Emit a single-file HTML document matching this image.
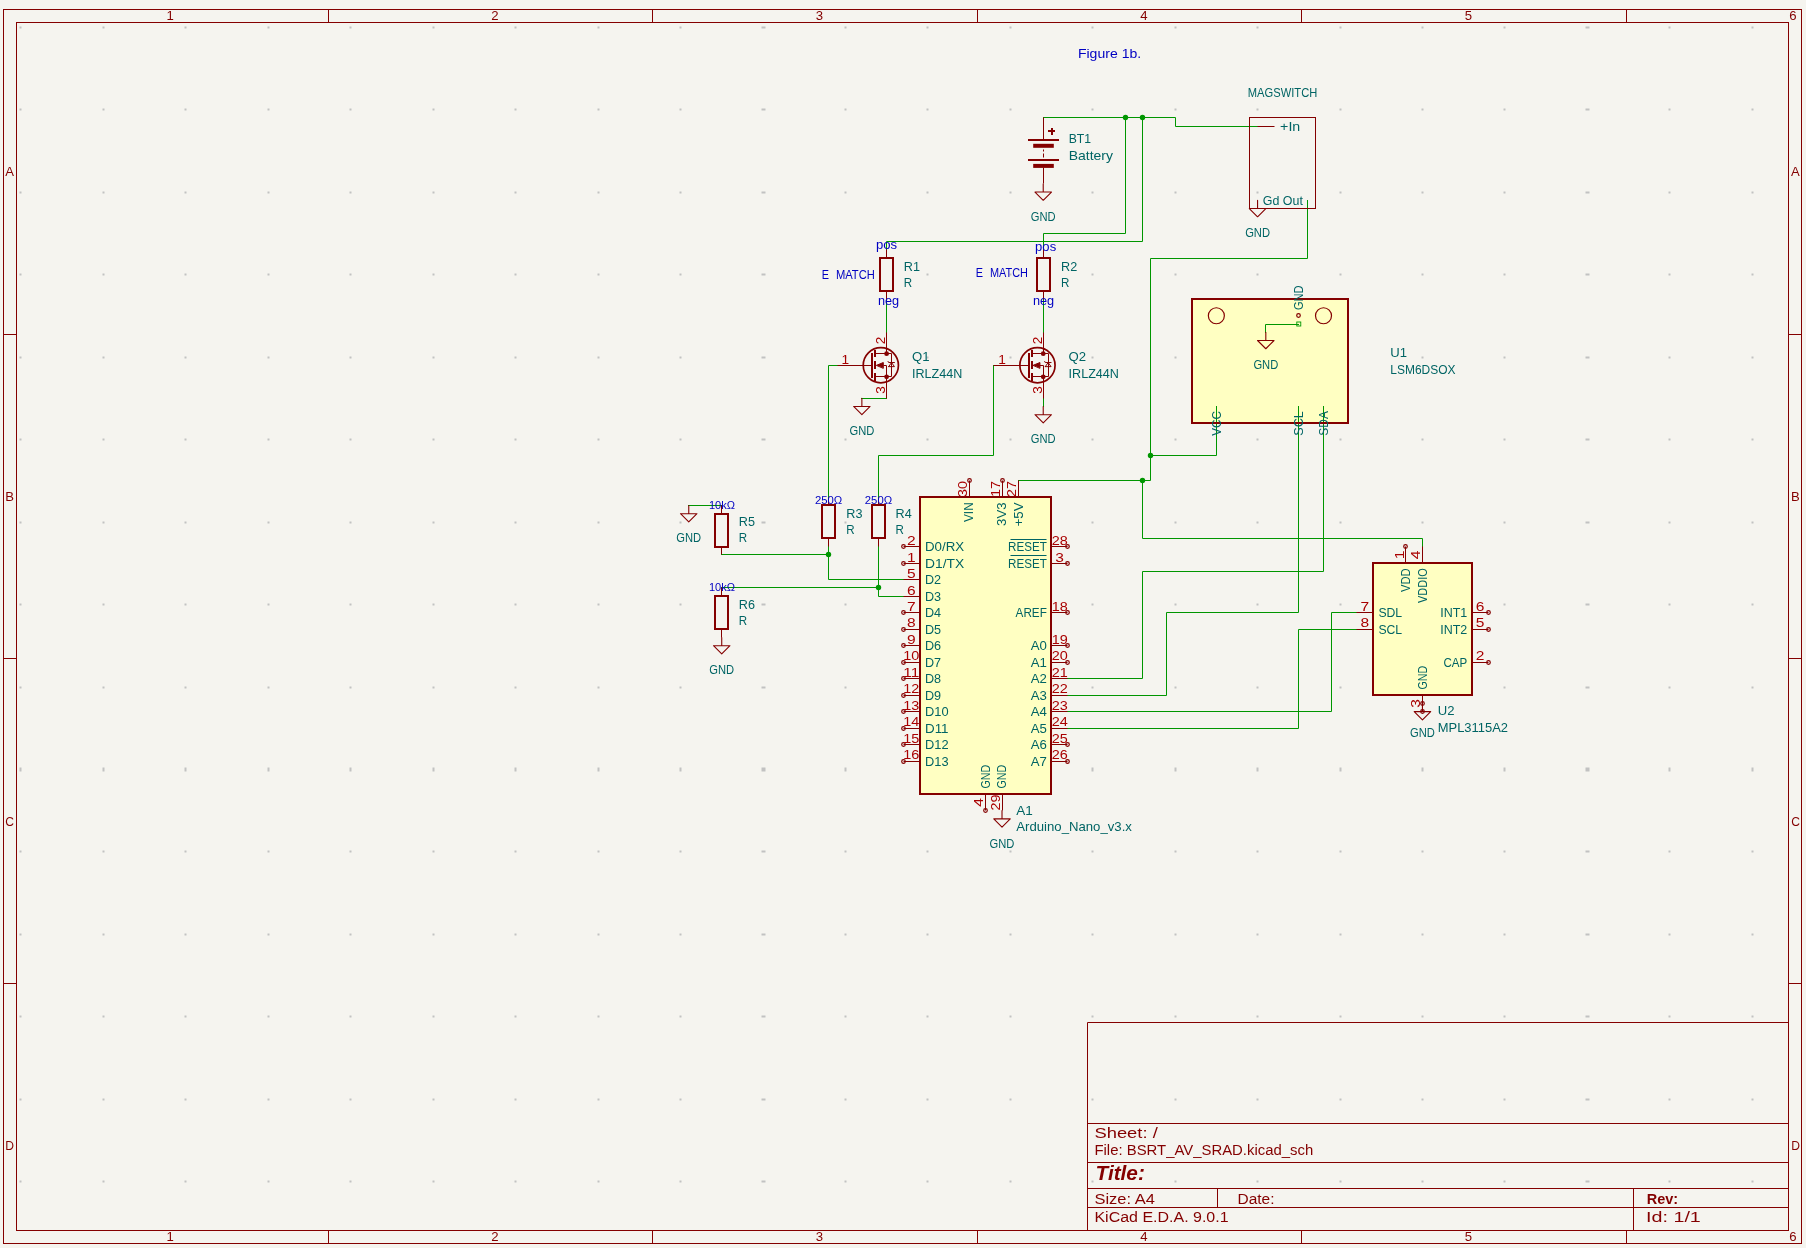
<!DOCTYPE html>
<html><head><meta charset="utf-8"><style>
html,body{margin:0;padding:0;background:#f5f4ef;}
body{width:1806px;height:1248px;overflow:hidden;}
svg{display:block;will-change:transform;}
text{font-family:"Liberation Sans", sans-serif;}
</style></head><body>
<svg width="1806" height="1248" viewBox="0 0 1806 1248" font-family='"Liberation Sans", sans-serif'>
<rect x="0" y="0" width="1806" height="1248" fill="#f5f4ef"/>
<path d="M19.5 26.5h2v2h-2zM19.5 108.5h2v2h-2zM19.5 191.5h2v2h-2zM19.5 273.5h2v2h-2zM19.5 356.5h2v2h-2zM19.5 438.5h2v2h-2zM19.5 521.5h2v2h-2zM19.5 603.5h2v2h-2zM19.5 686.5h2v2h-2zM19.5 767.5h2v4h-2zM19.5 850.5h2v2h-2zM19.5 933.5h2v2h-2zM19.5 1015.5h2v2h-2zM19.5 1098.5h2v2h-2zM19.5 1180.5h2v2h-2zM102.5 26.5h2v2h-2zM102.5 108.5h2v2h-2zM102.5 191.5h2v2h-2zM102.5 273.5h2v2h-2zM102.5 356.5h2v2h-2zM102.5 438.5h2v2h-2zM102.5 521.5h2v2h-2zM102.5 603.5h2v2h-2zM102.5 686.5h2v2h-2zM102.5 767.5h2v4h-2zM102.5 850.5h2v2h-2zM102.5 933.5h2v2h-2zM102.5 1015.5h2v2h-2zM102.5 1098.5h2v2h-2zM102.5 1180.5h2v2h-2zM184.5 26.5h2v2h-2zM184.5 108.5h2v2h-2zM184.5 191.5h2v2h-2zM184.5 273.5h2v2h-2zM184.5 356.5h2v2h-2zM184.5 438.5h2v2h-2zM184.5 521.5h2v2h-2zM184.5 603.5h2v2h-2zM184.5 686.5h2v2h-2zM184.5 767.5h2v4h-2zM184.5 850.5h2v2h-2zM184.5 933.5h2v2h-2zM184.5 1015.5h2v2h-2zM184.5 1098.5h2v2h-2zM184.5 1180.5h2v2h-2zM267.5 26.5h2v2h-2zM267.5 108.5h2v2h-2zM267.5 191.5h2v2h-2zM267.5 273.5h2v2h-2zM267.5 356.5h2v2h-2zM267.5 438.5h2v2h-2zM267.5 521.5h2v2h-2zM267.5 603.5h2v2h-2zM267.5 686.5h2v2h-2zM267.5 767.5h2v4h-2zM267.5 850.5h2v2h-2zM267.5 933.5h2v2h-2zM267.5 1015.5h2v2h-2zM267.5 1098.5h2v2h-2zM267.5 1180.5h2v2h-2zM349.5 26.5h2v2h-2zM349.5 108.5h2v2h-2zM349.5 191.5h2v2h-2zM349.5 273.5h2v2h-2zM349.5 356.5h2v2h-2zM349.5 438.5h2v2h-2zM349.5 521.5h2v2h-2zM349.5 603.5h2v2h-2zM349.5 686.5h2v2h-2zM349.5 767.5h2v4h-2zM349.5 850.5h2v2h-2zM349.5 933.5h2v2h-2zM349.5 1015.5h2v2h-2zM349.5 1098.5h2v2h-2zM349.5 1180.5h2v2h-2zM432.5 26.5h2v2h-2zM432.5 108.5h2v2h-2zM432.5 191.5h2v2h-2zM432.5 273.5h2v2h-2zM432.5 356.5h2v2h-2zM432.5 438.5h2v2h-2zM432.5 521.5h2v2h-2zM432.5 603.5h2v2h-2zM432.5 686.5h2v2h-2zM432.5 767.5h2v4h-2zM432.5 850.5h2v2h-2zM432.5 933.5h2v2h-2zM432.5 1015.5h2v2h-2zM432.5 1098.5h2v2h-2zM432.5 1180.5h2v2h-2zM514.5 26.5h2v2h-2zM514.5 108.5h2v2h-2zM514.5 191.5h2v2h-2zM514.5 273.5h2v2h-2zM514.5 356.5h2v2h-2zM514.5 438.5h2v2h-2zM514.5 521.5h2v2h-2zM514.5 603.5h2v2h-2zM514.5 686.5h2v2h-2zM514.5 767.5h2v4h-2zM514.5 850.5h2v2h-2zM514.5 933.5h2v2h-2zM514.5 1015.5h2v2h-2zM514.5 1098.5h2v2h-2zM514.5 1180.5h2v2h-2zM597.5 26.5h2v2h-2zM597.5 108.5h2v2h-2zM597.5 191.5h2v2h-2zM597.5 273.5h2v2h-2zM597.5 356.5h2v2h-2zM597.5 438.5h2v2h-2zM597.5 521.5h2v2h-2zM597.5 603.5h2v2h-2zM597.5 686.5h2v2h-2zM597.5 767.5h2v4h-2zM597.5 850.5h2v2h-2zM597.5 933.5h2v2h-2zM597.5 1015.5h2v2h-2zM597.5 1098.5h2v2h-2zM597.5 1180.5h2v2h-2zM679.5 26.5h2v2h-2zM679.5 108.5h2v2h-2zM679.5 191.5h2v2h-2zM679.5 273.5h2v2h-2zM679.5 356.5h2v2h-2zM679.5 438.5h2v2h-2zM679.5 521.5h2v2h-2zM679.5 603.5h2v2h-2zM679.5 686.5h2v2h-2zM679.5 767.5h2v4h-2zM679.5 850.5h2v2h-2zM679.5 933.5h2v2h-2zM679.5 1015.5h2v2h-2zM679.5 1098.5h2v2h-2zM679.5 1180.5h2v2h-2zM761.5 26.5h4v2h-4zM761.5 108.5h4v2h-4zM761.5 191.5h4v2h-4zM761.5 273.5h4v2h-4zM761.5 356.5h4v2h-4zM761.5 438.5h4v2h-4zM761.5 521.5h4v2h-4zM761.5 603.5h4v2h-4zM761.5 686.5h4v2h-4zM761.5 767.5h4v4h-4zM761.5 850.5h4v2h-4zM761.5 933.5h4v2h-4zM761.5 1015.5h4v2h-4zM761.5 1098.5h4v2h-4zM761.5 1180.5h4v2h-4zM844.5 26.5h2v2h-2zM844.5 108.5h2v2h-2zM844.5 191.5h2v2h-2zM844.5 273.5h2v2h-2zM844.5 356.5h2v2h-2zM844.5 438.5h2v2h-2zM844.5 521.5h2v2h-2zM844.5 603.5h2v2h-2zM844.5 686.5h2v2h-2zM844.5 767.5h2v4h-2zM844.5 850.5h2v2h-2zM844.5 933.5h2v2h-2zM844.5 1015.5h2v2h-2zM844.5 1098.5h2v2h-2zM844.5 1180.5h2v2h-2zM926.5 26.5h2v2h-2zM926.5 108.5h2v2h-2zM926.5 191.5h2v2h-2zM926.5 273.5h2v2h-2zM926.5 356.5h2v2h-2zM926.5 438.5h2v2h-2zM926.5 521.5h2v2h-2zM926.5 603.5h2v2h-2zM926.5 686.5h2v2h-2zM926.5 767.5h2v4h-2zM926.5 850.5h2v2h-2zM926.5 933.5h2v2h-2zM926.5 1015.5h2v2h-2zM926.5 1098.5h2v2h-2zM926.5 1180.5h2v2h-2zM1009.5 26.5h2v2h-2zM1009.5 108.5h2v2h-2zM1009.5 191.5h2v2h-2zM1009.5 273.5h2v2h-2zM1009.5 356.5h2v2h-2zM1009.5 438.5h2v2h-2zM1009.5 521.5h2v2h-2zM1009.5 603.5h2v2h-2zM1009.5 686.5h2v2h-2zM1009.5 767.5h2v4h-2zM1009.5 850.5h2v2h-2zM1009.5 933.5h2v2h-2zM1009.5 1015.5h2v2h-2zM1009.5 1098.5h2v2h-2zM1009.5 1180.5h2v2h-2zM1091.5 26.5h2v2h-2zM1091.5 108.5h2v2h-2zM1091.5 191.5h2v2h-2zM1091.5 273.5h2v2h-2zM1091.5 356.5h2v2h-2zM1091.5 438.5h2v2h-2zM1091.5 521.5h2v2h-2zM1091.5 603.5h2v2h-2zM1091.5 686.5h2v2h-2zM1091.5 767.5h2v4h-2zM1091.5 850.5h2v2h-2zM1091.5 933.5h2v2h-2zM1091.5 1015.5h2v2h-2zM1091.5 1098.5h2v2h-2zM1091.5 1180.5h2v2h-2zM1174.5 26.5h2v2h-2zM1174.5 108.5h2v2h-2zM1174.5 191.5h2v2h-2zM1174.5 273.5h2v2h-2zM1174.5 356.5h2v2h-2zM1174.5 438.5h2v2h-2zM1174.5 521.5h2v2h-2zM1174.5 603.5h2v2h-2zM1174.5 686.5h2v2h-2zM1174.5 767.5h2v4h-2zM1174.5 850.5h2v2h-2zM1174.5 933.5h2v2h-2zM1174.5 1015.5h2v2h-2zM1174.5 1098.5h2v2h-2zM1174.5 1180.5h2v2h-2zM1256.5 26.5h2v2h-2zM1256.5 108.5h2v2h-2zM1256.5 191.5h2v2h-2zM1256.5 273.5h2v2h-2zM1256.5 356.5h2v2h-2zM1256.5 438.5h2v2h-2zM1256.5 521.5h2v2h-2zM1256.5 603.5h2v2h-2zM1256.5 686.5h2v2h-2zM1256.5 767.5h2v4h-2zM1256.5 850.5h2v2h-2zM1256.5 933.5h2v2h-2zM1256.5 1015.5h2v2h-2zM1256.5 1098.5h2v2h-2zM1256.5 1180.5h2v2h-2zM1339.5 26.5h2v2h-2zM1339.5 108.5h2v2h-2zM1339.5 191.5h2v2h-2zM1339.5 273.5h2v2h-2zM1339.5 356.5h2v2h-2zM1339.5 438.5h2v2h-2zM1339.5 521.5h2v2h-2zM1339.5 603.5h2v2h-2zM1339.5 686.5h2v2h-2zM1339.5 767.5h2v4h-2zM1339.5 850.5h2v2h-2zM1339.5 933.5h2v2h-2zM1339.5 1015.5h2v2h-2zM1339.5 1098.5h2v2h-2zM1339.5 1180.5h2v2h-2zM1421.5 26.5h2v2h-2zM1421.5 108.5h2v2h-2zM1421.5 191.5h2v2h-2zM1421.5 273.5h2v2h-2zM1421.5 356.5h2v2h-2zM1421.5 438.5h2v2h-2zM1421.5 521.5h2v2h-2zM1421.5 603.5h2v2h-2zM1421.5 686.5h2v2h-2zM1421.5 767.5h2v4h-2zM1421.5 850.5h2v2h-2zM1421.5 933.5h2v2h-2zM1421.5 1015.5h2v2h-2zM1421.5 1098.5h2v2h-2zM1421.5 1180.5h2v2h-2zM1503.5 26.5h2v2h-2zM1503.5 108.5h2v2h-2zM1503.5 191.5h2v2h-2zM1503.5 273.5h2v2h-2zM1503.5 356.5h2v2h-2zM1503.5 438.5h2v2h-2zM1503.5 521.5h2v2h-2zM1503.5 603.5h2v2h-2zM1503.5 686.5h2v2h-2zM1503.5 767.5h2v4h-2zM1503.5 850.5h2v2h-2zM1503.5 933.5h2v2h-2zM1503.5 1015.5h2v2h-2zM1503.5 1098.5h2v2h-2zM1503.5 1180.5h2v2h-2zM1585.5 26.5h4v2h-4zM1585.5 108.5h4v2h-4zM1585.5 191.5h4v2h-4zM1585.5 273.5h4v2h-4zM1585.5 356.5h4v2h-4zM1585.5 438.5h4v2h-4zM1585.5 521.5h4v2h-4zM1585.5 603.5h4v2h-4zM1585.5 686.5h4v2h-4zM1585.5 767.5h4v4h-4zM1585.5 850.5h4v2h-4zM1585.5 933.5h4v2h-4zM1585.5 1015.5h4v2h-4zM1585.5 1098.5h4v2h-4zM1585.5 1180.5h4v2h-4zM1668.5 26.5h2v2h-2zM1668.5 108.5h2v2h-2zM1668.5 191.5h2v2h-2zM1668.5 273.5h2v2h-2zM1668.5 356.5h2v2h-2zM1668.5 438.5h2v2h-2zM1668.5 521.5h2v2h-2zM1668.5 603.5h2v2h-2zM1668.5 686.5h2v2h-2zM1668.5 767.5h2v4h-2zM1668.5 850.5h2v2h-2zM1668.5 933.5h2v2h-2zM1668.5 1015.5h2v2h-2zM1668.5 1098.5h2v2h-2zM1668.5 1180.5h2v2h-2zM1751.5 26.5h2v2h-2zM1751.5 108.5h2v2h-2zM1751.5 191.5h2v2h-2zM1751.5 273.5h2v2h-2zM1751.5 356.5h2v2h-2zM1751.5 438.5h2v2h-2zM1751.5 521.5h2v2h-2zM1751.5 603.5h2v2h-2zM1751.5 686.5h2v2h-2zM1751.5 767.5h2v4h-2zM1751.5 850.5h2v2h-2zM1751.5 933.5h2v2h-2zM1751.5 1015.5h2v2h-2zM1751.5 1098.5h2v2h-2zM1751.5 1180.5h2v2h-2z" fill="#c2c2c2"/>
<rect x="919.58" y="497.22" width="131.9" height="296.94" fill="#ffffc2"/>
<rect x="1191.62" y="299.26" width="156.63" height="123.72" fill="#ffffc2"/>
<rect x="1372.98" y="563.2" width="98.92" height="131.97" fill="#ffffc2"/>
<rect x="3.5" y="9.5" width="1798" height="1234" fill="none" stroke="#840000" stroke-width="1"/>
<rect x="16.5" y="22.5" width="1772" height="1208" fill="none" stroke="#840000" stroke-width="1"/>
<path d="M328.5 9.5V22.5M328.5 1230.5V1243.5M652.5 9.5V22.5M652.5 1230.5V1243.5M977.5 9.5V22.5M977.5 1230.5V1243.5M1301.5 9.5V22.5M1301.5 1230.5V1243.5M1626.5 9.5V22.5M1626.5 1230.5V1243.5M3.5 334.5H16.5M1788.5 334.5H1801.5M3.5 658.5H16.5M1788.5 658.5H1801.5M3.5 983.5H16.5M1788.5 983.5H1801.5" stroke="#840000" stroke-width="1" fill="none"/>
<text x="166.63" y="20.2" fill="#840000" textLength="7.34" lengthAdjust="spacingAndGlyphs" font-size="12.4">1</text>
<text x="166.63" y="1241" fill="#840000" textLength="7.34" lengthAdjust="spacingAndGlyphs" font-size="12.4">1</text>
<text x="491.18" y="20.2" fill="#840000" textLength="7.34" lengthAdjust="spacingAndGlyphs" font-size="12.4">2</text>
<text x="491.18" y="1241" fill="#840000" textLength="7.34" lengthAdjust="spacingAndGlyphs" font-size="12.4">2</text>
<text x="815.73" y="20.2" fill="#840000" textLength="7.34" lengthAdjust="spacingAndGlyphs" font-size="12.4">3</text>
<text x="815.73" y="1241" fill="#840000" textLength="7.34" lengthAdjust="spacingAndGlyphs" font-size="12.4">3</text>
<text x="1140.28" y="20.2" fill="#840000" textLength="7.34" lengthAdjust="spacingAndGlyphs" font-size="12.4">4</text>
<text x="1140.28" y="1241" fill="#840000" textLength="7.34" lengthAdjust="spacingAndGlyphs" font-size="12.4">4</text>
<text x="1464.83" y="20.2" fill="#840000" textLength="7.34" lengthAdjust="spacingAndGlyphs" font-size="12.4">5</text>
<text x="1464.83" y="1241" fill="#840000" textLength="7.34" lengthAdjust="spacingAndGlyphs" font-size="12.4">5</text>
<text x="1789.38" y="20.2" fill="#840000" textLength="7.34" lengthAdjust="spacingAndGlyphs" font-size="12.4">6</text>
<text x="1789.38" y="1241" fill="#840000" textLength="7.34" lengthAdjust="spacingAndGlyphs" font-size="12.4">6</text>
<text x="5.23" y="176.3" fill="#840000" textLength="8.74" lengthAdjust="spacingAndGlyphs" font-size="12.4">A</text>
<text x="1791.13" y="176.3" fill="#840000" textLength="8.74" lengthAdjust="spacingAndGlyphs" font-size="12.4">A</text>
<text x="5.23" y="501" fill="#840000" textLength="8.74" lengthAdjust="spacingAndGlyphs" font-size="12.4">B</text>
<text x="1791.13" y="501" fill="#840000" textLength="8.74" lengthAdjust="spacingAndGlyphs" font-size="12.4">B</text>
<text x="5.23" y="825.7" fill="#840000" textLength="8.74" lengthAdjust="spacingAndGlyphs" font-size="12.4">C</text>
<text x="1791.13" y="825.7" fill="#840000" textLength="8.74" lengthAdjust="spacingAndGlyphs" font-size="12.4">C</text>
<text x="5.23" y="1150.4" fill="#840000" textLength="8.74" lengthAdjust="spacingAndGlyphs" font-size="12.4">D</text>
<text x="1791.13" y="1150.4" fill="#840000" textLength="8.74" lengthAdjust="spacingAndGlyphs" font-size="12.4">D</text>
<path d="M1087.5 1230.5V1022.5M1087.5 1022.5H1788.5M1087.5 1123.5H1788.5M1087.5 1162.5H1788.5M1087.5 1188.5H1788.5M1087.5 1207.5H1788.5M1217.5 1188.5V1207.5M1633.5 1188.5V1230.5" stroke="#840000" stroke-width="1" fill="none"/>
<text x="1094.46" y="1137.6" fill="#840000" textLength="63.29" lengthAdjust="spacingAndGlyphs" font-size="14.9">Sheet: /</text>
<text x="1094.46" y="1155.1" fill="#840000" textLength="218.79" lengthAdjust="spacingAndGlyphs" font-size="14.9">File: BSRT_AV_SRAD.kicad_sch</text>
<text x="1095.57" y="1180.4" fill="#840000" textLength="49.27" lengthAdjust="spacingAndGlyphs" font-size="20.5" font-weight="bold" font-style="italic">Title:</text>
<text x="1094.46" y="1203.8" fill="#840000" textLength="60.39" lengthAdjust="spacingAndGlyphs" font-size="14.9">Size: A4</text>
<text x="1237.46" y="1203.8" fill="#840000" textLength="36.99" lengthAdjust="spacingAndGlyphs" font-size="14.9">Date:</text>
<text x="1094.46" y="1221.7" fill="#840000" textLength="134.09" lengthAdjust="spacingAndGlyphs" font-size="14.9">KiCad E.D.A. 9.0.1</text>
<text x="1646.66" y="1203.6" fill="#840000" textLength="31.49" lengthAdjust="spacingAndGlyphs" font-size="14.9" font-weight="bold">Rev:</text>
<text x="1646.06" y="1221.8" fill="#840000" textLength="54.79" lengthAdjust="spacingAndGlyphs" font-size="14.9">Id: 1/1</text>
<text x="1077.92" y="57.7" fill="#0000c2" textLength="63.26" lengthAdjust="spacingAndGlyphs" font-size="12.6">Figure 1b.</text>
<polyline points="1043.5,117.5 1175.5,117.5 1175.5,126.5 1257.5,126.5" fill="none" stroke="#009600" stroke-width="1" stroke-linejoin="miter" stroke-linecap="square"/>
<polyline points="1125.5,117.5 1125.5,233.5 1043.5,233.5 1043.5,249.5" fill="none" stroke="#009600" stroke-width="1" stroke-linejoin="miter" stroke-linecap="square"/>
<polyline points="1142.5,117.5 1142.5,241.5 886.5,241.5 886.5,249.5" fill="none" stroke="#009600" stroke-width="1" stroke-linejoin="miter" stroke-linecap="square"/>
<polyline points="886.5,299.5 886.5,332.5" fill="none" stroke="#009600" stroke-width="1" stroke-linejoin="miter" stroke-linecap="square"/>
<polyline points="1043.5,299.5 1043.5,332.5" fill="none" stroke="#009600" stroke-width="1" stroke-linejoin="miter" stroke-linecap="square"/>
<polyline points="886.5,398.5 861.5,398.5" fill="none" stroke="#009600" stroke-width="1" stroke-linejoin="miter" stroke-linecap="square"/>
<polyline points="1043.5,398.5 1043.5,406.5" fill="none" stroke="#009600" stroke-width="1" stroke-linejoin="miter" stroke-linecap="square"/>
<polyline points="837.5,365.5 828.5,365.5 828.5,497.5" fill="none" stroke="#009600" stroke-width="1" stroke-linejoin="miter" stroke-linecap="square"/>
<polyline points="993.5,365.5 993.5,455.5 878.5,455.5 878.5,497.5" fill="none" stroke="#009600" stroke-width="1" stroke-linejoin="miter" stroke-linecap="square"/>
<polyline points="828.5,546.5 828.5,579.5 903.5,579.5" fill="none" stroke="#009600" stroke-width="1" stroke-linejoin="miter" stroke-linecap="square"/>
<polyline points="721.5,554.5 828.5,554.5" fill="none" stroke="#009600" stroke-width="1" stroke-linejoin="miter" stroke-linecap="square"/>
<polyline points="721.5,505.5 688.5,505.5" fill="none" stroke="#009600" stroke-width="1" stroke-linejoin="miter" stroke-linecap="square"/>
<polyline points="878.5,546.5 878.5,596.5 903.5,596.5" fill="none" stroke="#009600" stroke-width="1" stroke-linejoin="miter" stroke-linecap="square"/>
<polyline points="721.5,587.5 878.5,587.5" fill="none" stroke="#009600" stroke-width="1" stroke-linejoin="miter" stroke-linecap="square"/>
<polyline points="1307.5,200.5 1307.5,258.5 1150.5,258.5 1150.5,480.5 1018.5,480.5" fill="none" stroke="#009600" stroke-width="1" stroke-linejoin="miter" stroke-linecap="square"/>
<polyline points="1150.5,455.5 1216.5,455.5 1216.5,406.5" fill="none" stroke="#009600" stroke-width="1" stroke-linejoin="miter" stroke-linecap="square"/>
<polyline points="1142.5,480.5 1142.5,538.5 1422.5,538.5 1422.5,546.5" fill="none" stroke="#009600" stroke-width="1" stroke-linejoin="miter" stroke-linecap="square"/>
<polyline points="1067.5,678.5 1142.5,678.5 1142.5,571.5 1323.5,571.5 1323.5,406.5" fill="none" stroke="#009600" stroke-width="1" stroke-linejoin="miter" stroke-linecap="square"/>
<polyline points="1067.5,695.5 1166.5,695.5 1166.5,612.5 1298.5,612.5 1298.5,406.5" fill="none" stroke="#009600" stroke-width="1" stroke-linejoin="miter" stroke-linecap="square"/>
<polyline points="1067.5,711.5 1331.5,711.5 1331.5,612.5 1356.5,612.5" fill="none" stroke="#009600" stroke-width="1" stroke-linejoin="miter" stroke-linecap="square"/>
<polyline points="1067.5,728.5 1298.5,728.5 1298.5,629.5 1356.5,629.5" fill="none" stroke="#009600" stroke-width="1" stroke-linejoin="miter" stroke-linecap="square"/>
<polyline points="1298.5,324.5 1265.5,324.5 1265.5,332.5" fill="none" stroke="#009600" stroke-width="1" stroke-linejoin="miter" stroke-linecap="square"/>
<circle cx="1125.5" cy="117.5" r="2.7" fill="#009600"/>
<circle cx="1142.5" cy="117.5" r="2.7" fill="#009600"/>
<circle cx="1150.5" cy="455.5" r="2.7" fill="#009600"/>
<circle cx="1142.5" cy="480.5" r="2.7" fill="#009600"/>
<circle cx="828.5" cy="554.5" r="2.7" fill="#009600"/>
<circle cx="878.5" cy="587.5" r="2.7" fill="#009600"/>
<polyline points="1043.5,117.5 1043.5,139.5" fill="none" stroke="#840000" stroke-width="1" stroke-linejoin="round" stroke-linecap="butt"/>
<polyline points="1028,140 1059,140" fill="none" stroke="#840000" stroke-width="2" stroke-linejoin="round" stroke-linecap="butt"/>
<rect x="1033.2" y="143.8" width="20.6" height="4.0" fill="#840000"/>
<polyline points="1028,160 1059,160" fill="none" stroke="#840000" stroke-width="2" stroke-linejoin="round" stroke-linecap="butt"/>
<rect x="1033.2" y="163.9" width="20.6" height="4.0" fill="#840000"/>
<polyline points="1043.5,149.5 1043.5,151.5" fill="none" stroke="#840000" stroke-width="1" stroke-linejoin="round" stroke-linecap="butt"/>
<polyline points="1043.5,153.5 1043.5,157.5" fill="none" stroke="#840000" stroke-width="1" stroke-linejoin="round" stroke-linecap="butt"/>
<polyline points="1043.5,167.5 1043.5,183.5" fill="none" stroke="#840000" stroke-width="1" stroke-linejoin="round" stroke-linecap="butt"/>
<polyline points="1048,131 1055,131" fill="none" stroke="#840000" stroke-width="2" stroke-linejoin="round" stroke-linecap="butt"/>
<polyline points="1052,128 1052,135" fill="none" stroke="#840000" stroke-width="2" stroke-linejoin="round" stroke-linecap="butt"/>
<text x="1068.72" y="142.7" fill="#006464" textLength="22.36" lengthAdjust="spacingAndGlyphs" font-size="12.6">BT1</text>
<text x="1068.72" y="159.9" fill="#006464" textLength="44.26" lengthAdjust="spacingAndGlyphs" font-size="12.6">Battery</text>
<polyline points="1043.23,183.78 1043.23,192.03 1051.48,192.03 1043.23,200.28 1034.99,192.03 1043.23,192.03" fill="none" stroke="#840000" stroke-width="1.1" stroke-linejoin="round" stroke-linecap="round"/>
<text x="1030.8" y="220.67" fill="#006464" textLength="24.86" lengthAdjust="spacingAndGlyphs" font-size="12.6">GND</text>
<rect x="1249.5" y="117.5" width="66" height="91" fill="none" stroke="#840000" stroke-width="1"/>
<polyline points="1257.5,126.5 1274.5,126.5" fill="none" stroke="#840000" stroke-width="1" stroke-linejoin="round" stroke-linecap="butt"/>
<text x="1280.12" y="131" fill="#006464" textLength="20.16" lengthAdjust="spacingAndGlyphs" font-size="12.6">+In</text>
<text x="1262.82" y="204.6" fill="#006464" textLength="40.06" lengthAdjust="spacingAndGlyphs" font-size="12.6">Gd Out</text>
<text x="1247.82" y="97" fill="#006464" textLength="69.46" lengthAdjust="spacingAndGlyphs" font-size="12.6">MAGSWITCH</text>
<polyline points="1257.57,200.28 1257.57,208.53 1265.81,208.53 1257.57,216.77 1249.32,208.53 1257.57,208.53" fill="none" stroke="#840000" stroke-width="1.1" stroke-linejoin="round" stroke-linecap="round"/>
<text x="1245.13" y="237.17" fill="#006464" textLength="24.86" lengthAdjust="spacingAndGlyphs" font-size="12.6">GND</text>
<rect x="880" y="258" width="13" height="33" fill="none" stroke="#840000" stroke-width="2"/>
<polyline points="886.5,249.5 886.5,258.5" fill="none" stroke="#840000" stroke-width="1" stroke-linejoin="round" stroke-linecap="butt"/>
<polyline points="886.5,291.5 886.5,299.5" fill="none" stroke="#840000" stroke-width="1" stroke-linejoin="round" stroke-linecap="butt"/>
<text x="903.82" y="270.9" fill="#006464" textLength="16.16" lengthAdjust="spacingAndGlyphs" font-size="12.6">R1</text>
<text x="903.82" y="286.6" fill="#006464" textLength="8.36" lengthAdjust="spacingAndGlyphs" font-size="12.6">R</text>
<rect x="1037" y="258" width="13" height="33" fill="none" stroke="#840000" stroke-width="2"/>
<polyline points="1043.5,249.5 1043.5,258.5" fill="none" stroke="#840000" stroke-width="1" stroke-linejoin="round" stroke-linecap="butt"/>
<polyline points="1043.5,291.5 1043.5,299.5" fill="none" stroke="#840000" stroke-width="1" stroke-linejoin="round" stroke-linecap="butt"/>
<text x="1061.12" y="270.9" fill="#006464" textLength="16.16" lengthAdjust="spacingAndGlyphs" font-size="12.6">R2</text>
<text x="1061.12" y="286.6" fill="#006464" textLength="8.36" lengthAdjust="spacingAndGlyphs" font-size="12.6">R</text>
<rect x="822" y="505" width="13" height="33" fill="none" stroke="#840000" stroke-width="2"/>
<polyline points="828.5,497.5 828.5,505.5" fill="none" stroke="#840000" stroke-width="1" stroke-linejoin="round" stroke-linecap="butt"/>
<polyline points="828.5,538.5 828.5,546.5" fill="none" stroke="#840000" stroke-width="1" stroke-linejoin="round" stroke-linecap="butt"/>
<text x="846.32" y="518" fill="#006464" textLength="16.16" lengthAdjust="spacingAndGlyphs" font-size="12.6">R3</text>
<text x="846.32" y="533.8" fill="#006464" textLength="8.36" lengthAdjust="spacingAndGlyphs" font-size="12.6">R</text>
<rect x="872" y="505" width="13" height="33" fill="none" stroke="#840000" stroke-width="2"/>
<polyline points="878.5,497.5 878.5,505.5" fill="none" stroke="#840000" stroke-width="1" stroke-linejoin="round" stroke-linecap="butt"/>
<polyline points="878.5,538.5 878.5,546.5" fill="none" stroke="#840000" stroke-width="1" stroke-linejoin="round" stroke-linecap="butt"/>
<text x="895.62" y="518" fill="#006464" textLength="16.16" lengthAdjust="spacingAndGlyphs" font-size="12.6">R4</text>
<text x="895.62" y="533.8" fill="#006464" textLength="8.36" lengthAdjust="spacingAndGlyphs" font-size="12.6">R</text>
<rect x="715" y="514" width="13" height="33" fill="none" stroke="#840000" stroke-width="2"/>
<polyline points="721.5,505.5 721.5,513.5" fill="none" stroke="#840000" stroke-width="1" stroke-linejoin="round" stroke-linecap="butt"/>
<polyline points="721.5,546.5 721.5,554.5" fill="none" stroke="#840000" stroke-width="1" stroke-linejoin="round" stroke-linecap="butt"/>
<text x="738.82" y="526" fill="#006464" textLength="16.16" lengthAdjust="spacingAndGlyphs" font-size="12.6">R5</text>
<text x="738.82" y="542.3" fill="#006464" textLength="8.36" lengthAdjust="spacingAndGlyphs" font-size="12.6">R</text>
<rect x="715" y="596" width="13" height="33" fill="none" stroke="#840000" stroke-width="2"/>
<polyline points="721.5,587.5 721.5,596.5" fill="none" stroke="#840000" stroke-width="1" stroke-linejoin="round" stroke-linecap="butt"/>
<polyline points="721.5,629.5 721.5,637.5" fill="none" stroke="#840000" stroke-width="1" stroke-linejoin="round" stroke-linecap="butt"/>
<text x="738.82" y="608.9" fill="#006464" textLength="16.16" lengthAdjust="spacingAndGlyphs" font-size="12.6">R6</text>
<text x="738.82" y="625.1" fill="#006464" textLength="8.36" lengthAdjust="spacingAndGlyphs" font-size="12.6">R</text>
<text x="821.82" y="278.9" fill="#0000c2" textLength="7.26" lengthAdjust="spacingAndGlyphs" font-size="12.6">E</text>
<text x="835.92" y="278.9" fill="#0000c2" textLength="38.96" lengthAdjust="spacingAndGlyphs" font-size="12.6">MATCH</text>
<text x="975.82" y="277" fill="#0000c2" textLength="7.26" lengthAdjust="spacingAndGlyphs" font-size="12.6">E</text>
<text x="989.92" y="277" fill="#0000c2" textLength="38.06" lengthAdjust="spacingAndGlyphs" font-size="12.6">MATCH</text>
<text x="876.02" y="248.8" fill="#0000c2" textLength="21.16" lengthAdjust="spacingAndGlyphs" font-size="12.6">pos</text>
<text x="1035.12" y="250.7" fill="#0000c2" textLength="21.06" lengthAdjust="spacingAndGlyphs" font-size="12.6">pos</text>
<text x="877.92" y="304.9" fill="#0000c2" textLength="21.26" lengthAdjust="spacingAndGlyphs" font-size="12.6">neg</text>
<text x="1032.92" y="304.9" fill="#0000c2" textLength="21.26" lengthAdjust="spacingAndGlyphs" font-size="12.6">neg</text>
<text x="814.93" y="503.8" fill="#0000c2" textLength="27.34" lengthAdjust="spacingAndGlyphs" font-size="11">250Ω</text>
<text x="864.83" y="503.8" fill="#0000c2" textLength="27.34" lengthAdjust="spacingAndGlyphs" font-size="11">250Ω</text>
<text x="708.93" y="508.8" fill="#0000c2" textLength="26.14" lengthAdjust="spacingAndGlyphs" font-size="11">10kΩ</text>
<text x="708.93" y="591.3" fill="#0000c2" textLength="26.14" lengthAdjust="spacingAndGlyphs" font-size="11">10kΩ</text>
<polyline points="861.87,398.24 861.87,406.48 870.12,406.48 861.87,414.73 853.63,406.48 861.87,406.48" fill="none" stroke="#840000" stroke-width="1.1" stroke-linejoin="round" stroke-linecap="round"/>
<text x="849.44" y="435.13" fill="#006464" textLength="24.86" lengthAdjust="spacingAndGlyphs" font-size="12.6">GND</text>
<polyline points="1043.23,406.48 1043.23,414.73 1051.48,414.73 1043.23,422.98 1034.99,414.73 1043.23,414.73" fill="none" stroke="#840000" stroke-width="1.1" stroke-linejoin="round" stroke-linecap="round"/>
<text x="1030.8" y="443.38" fill="#006464" textLength="24.86" lengthAdjust="spacingAndGlyphs" font-size="12.6">GND</text>
<polyline points="1265.81,332.25 1265.81,340.5 1274.05,340.5 1265.81,348.75 1257.57,340.5 1265.81,340.5" fill="none" stroke="#840000" stroke-width="1.1" stroke-linejoin="round" stroke-linecap="round"/>
<text x="1253.38" y="369.14" fill="#006464" textLength="24.86" lengthAdjust="spacingAndGlyphs" font-size="12.6">GND</text>
<polyline points="688.76,505.46 688.76,513.71 697,513.71 688.76,521.96 680.51,513.71 688.76,513.71" fill="none" stroke="#840000" stroke-width="1.1" stroke-linejoin="round" stroke-linecap="round"/>
<text x="676.33" y="542.36" fill="#006464" textLength="24.86" lengthAdjust="spacingAndGlyphs" font-size="12.6">GND</text>
<polyline points="721.73,637.44 721.73,645.69 729.98,645.69 721.73,653.93 713.49,645.69 721.73,645.69" fill="none" stroke="#840000" stroke-width="1.1" stroke-linejoin="round" stroke-linecap="round"/>
<text x="709.3" y="674.33" fill="#006464" textLength="24.86" lengthAdjust="spacingAndGlyphs" font-size="12.6">GND</text>
<polyline points="1002.01,810.65 1002.01,818.9 1010.26,818.9 1002.01,827.15 993.77,818.9 1002.01,818.9" fill="none" stroke="#840000" stroke-width="1.1" stroke-linejoin="round" stroke-linecap="round"/>
<text x="989.58" y="847.54" fill="#006464" textLength="24.86" lengthAdjust="spacingAndGlyphs" font-size="12.6">GND</text>
<circle cx="880.83" cy="365.24" r="17.6" fill="none" stroke="#840000" stroke-width="1.7"/>
<polyline points="837.5,365.5 871.5,365.5" fill="none" stroke="#840000" stroke-width="1" stroke-linejoin="round" stroke-linecap="butt"/>
<polyline points="872,353 872,378" fill="none" stroke="#840000" stroke-width="2" stroke-linejoin="round" stroke-linecap="butt"/>
<polyline points="875,350 875,357" fill="none" stroke="#840000" stroke-width="2" stroke-linejoin="round" stroke-linecap="butt"/>
<polyline points="875,361 875,369" fill="none" stroke="#840000" stroke-width="2" stroke-linejoin="round" stroke-linecap="butt"/>
<polyline points="875,373 875,381" fill="none" stroke="#840000" stroke-width="2" stroke-linejoin="round" stroke-linecap="butt"/>
<polyline points="875.5,353.5 891.5,353.5 891.5,376.5 875.5,376.5" fill="none" stroke="#840000" stroke-width="1" stroke-linejoin="round" stroke-linecap="butt"/>
<polyline points="883.5,365.5 886.5,365.5 886.5,376.5" fill="none" stroke="#840000" stroke-width="1" stroke-linejoin="round" stroke-linecap="butt"/>
<polygon points="876.71,365.24 883.31,362.52 883.31,367.97" fill="#840000" stroke="#840000" stroke-width="1" stroke-linejoin="round" stroke-linecap="round"/>
<circle cx="886.6" cy="353.7" r="2.4" fill="#840000"/>
<circle cx="886.6" cy="376.78" r="2.4" fill="#840000"/>
<polyline points="888.65,366.64 894.45,366.64 891.55,362.54 888.65,366.64" fill="none" stroke="#840000" stroke-width="1" stroke-linejoin="round" stroke-linecap="round"/>
<polyline points="888.05,361.44 888.65,362.54 894.45,362.54" fill="none" stroke="#840000" stroke-width="1" stroke-linejoin="round" stroke-linecap="round"/>
<polyline points="886.5,332.5 886.5,353.5" fill="none" stroke="#840000" stroke-width="1" stroke-linejoin="round" stroke-linecap="butt"/>
<polyline points="886.5,376.5 886.5,398.5" fill="none" stroke="#840000" stroke-width="1" stroke-linejoin="round" stroke-linecap="butt"/>
<text x="841.55" y="363.64" fill="#a90000" textLength="7.66" lengthAdjust="spacingAndGlyphs" font-size="12.6">1</text>
<g transform="translate(880.7,343.4) rotate(-90)">
<text x="-0.88" y="4.33" fill="#a90000" textLength="7.56" lengthAdjust="spacingAndGlyphs" font-size="12.6">2</text>
</g>
<g transform="translate(880.7,392.89) rotate(-90)">
<text x="-0.88" y="4.33" fill="#a90000" textLength="7.56" lengthAdjust="spacingAndGlyphs" font-size="12.6">3</text>
</g>
<text x="911.92" y="361.04" fill="#006464" textLength="17.56" lengthAdjust="spacingAndGlyphs" font-size="12.6">Q1</text>
<text x="911.92" y="377.54" fill="#006464" textLength="50.36" lengthAdjust="spacingAndGlyphs" font-size="12.6">IRLZ44N</text>
<circle cx="1037.46" cy="365.24" r="17.6" fill="none" stroke="#840000" stroke-width="1.7"/>
<polyline points="993.5,365.5 1028.5,365.5" fill="none" stroke="#840000" stroke-width="1" stroke-linejoin="round" stroke-linecap="butt"/>
<polyline points="1029,353 1029,378" fill="none" stroke="#840000" stroke-width="2" stroke-linejoin="round" stroke-linecap="butt"/>
<polyline points="1032,350 1032,357" fill="none" stroke="#840000" stroke-width="2" stroke-linejoin="round" stroke-linecap="butt"/>
<polyline points="1032,361 1032,369" fill="none" stroke="#840000" stroke-width="2" stroke-linejoin="round" stroke-linecap="butt"/>
<polyline points="1032,373 1032,381" fill="none" stroke="#840000" stroke-width="2" stroke-linejoin="round" stroke-linecap="butt"/>
<polyline points="1031.5,353.5 1048.5,353.5 1048.5,376.5 1031.5,376.5" fill="none" stroke="#840000" stroke-width="1" stroke-linejoin="round" stroke-linecap="butt"/>
<polyline points="1039.5,365.5 1043.5,365.5 1043.5,376.5" fill="none" stroke="#840000" stroke-width="1" stroke-linejoin="round" stroke-linecap="butt"/>
<polygon points="1033.34,365.24 1039.93,362.52 1039.93,367.97" fill="#840000" stroke="#840000" stroke-width="1" stroke-linejoin="round" stroke-linecap="round"/>
<circle cx="1043.23" cy="353.7" r="2.4" fill="#840000"/>
<circle cx="1043.23" cy="376.78" r="2.4" fill="#840000"/>
<polyline points="1045.28,366.64 1051.08,366.64 1048.18,362.54 1045.28,366.64" fill="none" stroke="#840000" stroke-width="1" stroke-linejoin="round" stroke-linecap="round"/>
<polyline points="1044.68,361.44 1045.28,362.54 1051.08,362.54" fill="none" stroke="#840000" stroke-width="1" stroke-linejoin="round" stroke-linecap="round"/>
<polyline points="1043.5,332.5 1043.5,353.5" fill="none" stroke="#840000" stroke-width="1" stroke-linejoin="round" stroke-linecap="butt"/>
<polyline points="1043.5,376.5 1043.5,398.5" fill="none" stroke="#840000" stroke-width="1" stroke-linejoin="round" stroke-linecap="butt"/>
<text x="998.18" y="363.64" fill="#a90000" textLength="7.66" lengthAdjust="spacingAndGlyphs" font-size="12.6">1</text>
<g transform="translate(1037.33,343.4) rotate(-90)">
<text x="-0.88" y="4.33" fill="#a90000" textLength="7.56" lengthAdjust="spacingAndGlyphs" font-size="12.6">2</text>
</g>
<g transform="translate(1037.33,392.89) rotate(-90)">
<text x="-0.88" y="4.33" fill="#a90000" textLength="7.56" lengthAdjust="spacingAndGlyphs" font-size="12.6">3</text>
</g>
<text x="1068.55" y="361.04" fill="#006464" textLength="17.56" lengthAdjust="spacingAndGlyphs" font-size="12.6">Q2</text>
<text x="1068.55" y="377.54" fill="#006464" textLength="50.36" lengthAdjust="spacingAndGlyphs" font-size="12.6">IRLZ44N</text>
<rect x="920" y="497" width="131" height="297" fill="none" stroke="#840000" stroke-width="2"/>
<polyline points="903.5,546.5 919.5,546.5" fill="none" stroke="#840000" stroke-width="1" stroke-linejoin="round" stroke-linecap="butt"/>
<circle cx="903.5" cy="546.5" r="1.8" fill="none" stroke="#840000" stroke-width="1.2"/>
<text x="907" y="545.01" fill="#a90000" textLength="8.66" lengthAdjust="spacingAndGlyphs" font-size="12.6">2</text>
<text x="925" y="551.11" fill="#006464" textLength="39.16" lengthAdjust="spacingAndGlyphs" font-size="12.6">D0/RX</text>
<polyline points="903.5,563.5 919.5,563.5" fill="none" stroke="#840000" stroke-width="1" stroke-linejoin="round" stroke-linecap="butt"/>
<circle cx="903.5" cy="563.5" r="1.8" fill="none" stroke="#840000" stroke-width="1.2"/>
<text x="907" y="561.5" fill="#a90000" textLength="8.66" lengthAdjust="spacingAndGlyphs" font-size="12.6">1</text>
<text x="925" y="567.6" fill="#006464" textLength="39.16" lengthAdjust="spacingAndGlyphs" font-size="12.6">D1/TX</text>
<polyline points="903.5,579.5 919.5,579.5" fill="none" stroke="#840000" stroke-width="1" stroke-linejoin="round" stroke-linecap="butt"/>
<text x="907" y="578" fill="#a90000" textLength="8.66" lengthAdjust="spacingAndGlyphs" font-size="12.6">5</text>
<text x="925" y="584.1" fill="#006464" textLength="16.16" lengthAdjust="spacingAndGlyphs" font-size="12.6">D2</text>
<polyline points="903.5,596.5 919.5,596.5" fill="none" stroke="#840000" stroke-width="1" stroke-linejoin="round" stroke-linecap="butt"/>
<text x="907" y="594.5" fill="#a90000" textLength="8.66" lengthAdjust="spacingAndGlyphs" font-size="12.6">6</text>
<text x="925" y="600.6" fill="#006464" textLength="16.16" lengthAdjust="spacingAndGlyphs" font-size="12.6">D3</text>
<polyline points="903.5,612.5 919.5,612.5" fill="none" stroke="#840000" stroke-width="1" stroke-linejoin="round" stroke-linecap="butt"/>
<circle cx="903.5" cy="612.5" r="1.8" fill="none" stroke="#840000" stroke-width="1.2"/>
<text x="907" y="610.99" fill="#a90000" textLength="8.66" lengthAdjust="spacingAndGlyphs" font-size="12.6">7</text>
<text x="925" y="617.09" fill="#006464" textLength="16.16" lengthAdjust="spacingAndGlyphs" font-size="12.6">D4</text>
<polyline points="903.5,629.5 919.5,629.5" fill="none" stroke="#840000" stroke-width="1" stroke-linejoin="round" stroke-linecap="butt"/>
<circle cx="903.5" cy="629.5" r="1.8" fill="none" stroke="#840000" stroke-width="1.2"/>
<text x="907" y="627.49" fill="#a90000" textLength="8.66" lengthAdjust="spacingAndGlyphs" font-size="12.6">8</text>
<text x="925" y="633.59" fill="#006464" textLength="16.16" lengthAdjust="spacingAndGlyphs" font-size="12.6">D5</text>
<polyline points="903.5,645.5 919.5,645.5" fill="none" stroke="#840000" stroke-width="1" stroke-linejoin="round" stroke-linecap="butt"/>
<circle cx="903.5" cy="645.5" r="1.8" fill="none" stroke="#840000" stroke-width="1.2"/>
<text x="907" y="643.99" fill="#a90000" textLength="8.66" lengthAdjust="spacingAndGlyphs" font-size="12.6">9</text>
<text x="925" y="650.09" fill="#006464" textLength="16.16" lengthAdjust="spacingAndGlyphs" font-size="12.6">D6</text>
<polyline points="903.5,662.5 919.5,662.5" fill="none" stroke="#840000" stroke-width="1" stroke-linejoin="round" stroke-linecap="butt"/>
<circle cx="903.5" cy="662.5" r="1.8" fill="none" stroke="#840000" stroke-width="1.2"/>
<text x="903.3" y="660.48" fill="#a90000" textLength="16.06" lengthAdjust="spacingAndGlyphs" font-size="12.6">10</text>
<text x="925" y="666.58" fill="#006464" textLength="16.16" lengthAdjust="spacingAndGlyphs" font-size="12.6">D7</text>
<polyline points="903.5,678.5 919.5,678.5" fill="none" stroke="#840000" stroke-width="1" stroke-linejoin="round" stroke-linecap="butt"/>
<circle cx="903.5" cy="678.5" r="1.8" fill="none" stroke="#840000" stroke-width="1.2"/>
<text x="903.3" y="676.98" fill="#a90000" textLength="16.06" lengthAdjust="spacingAndGlyphs" font-size="12.6">11</text>
<text x="925" y="683.08" fill="#006464" textLength="16.16" lengthAdjust="spacingAndGlyphs" font-size="12.6">D8</text>
<polyline points="903.5,695.5 919.5,695.5" fill="none" stroke="#840000" stroke-width="1" stroke-linejoin="round" stroke-linecap="butt"/>
<circle cx="903.5" cy="695.5" r="1.8" fill="none" stroke="#840000" stroke-width="1.2"/>
<text x="903.3" y="693.48" fill="#a90000" textLength="16.06" lengthAdjust="spacingAndGlyphs" font-size="12.6">12</text>
<text x="925" y="699.58" fill="#006464" textLength="16.16" lengthAdjust="spacingAndGlyphs" font-size="12.6">D9</text>
<polyline points="903.5,711.5 919.5,711.5" fill="none" stroke="#840000" stroke-width="1" stroke-linejoin="round" stroke-linecap="butt"/>
<circle cx="903.5" cy="711.5" r="1.8" fill="none" stroke="#840000" stroke-width="1.2"/>
<text x="903.3" y="709.97" fill="#a90000" textLength="16.06" lengthAdjust="spacingAndGlyphs" font-size="12.6">13</text>
<text x="925" y="716.07" fill="#006464" textLength="23.56" lengthAdjust="spacingAndGlyphs" font-size="12.6">D10</text>
<polyline points="903.5,728.5 919.5,728.5" fill="none" stroke="#840000" stroke-width="1" stroke-linejoin="round" stroke-linecap="butt"/>
<circle cx="903.5" cy="728.5" r="1.8" fill="none" stroke="#840000" stroke-width="1.2"/>
<text x="903.3" y="726.47" fill="#a90000" textLength="16.06" lengthAdjust="spacingAndGlyphs" font-size="12.6">14</text>
<text x="925" y="732.57" fill="#006464" textLength="23.56" lengthAdjust="spacingAndGlyphs" font-size="12.6">D11</text>
<polyline points="903.5,744.5 919.5,744.5" fill="none" stroke="#840000" stroke-width="1" stroke-linejoin="round" stroke-linecap="butt"/>
<circle cx="903.5" cy="744.5" r="1.8" fill="none" stroke="#840000" stroke-width="1.2"/>
<text x="903.3" y="742.97" fill="#a90000" textLength="16.06" lengthAdjust="spacingAndGlyphs" font-size="12.6">15</text>
<text x="925" y="749.07" fill="#006464" textLength="23.56" lengthAdjust="spacingAndGlyphs" font-size="12.6">D12</text>
<polyline points="903.5,761.5 919.5,761.5" fill="none" stroke="#840000" stroke-width="1" stroke-linejoin="round" stroke-linecap="butt"/>
<circle cx="903.5" cy="761.5" r="1.8" fill="none" stroke="#840000" stroke-width="1.2"/>
<text x="903.3" y="759.46" fill="#a90000" textLength="16.06" lengthAdjust="spacingAndGlyphs" font-size="12.6">16</text>
<text x="925" y="765.56" fill="#006464" textLength="23.56" lengthAdjust="spacingAndGlyphs" font-size="12.6">D13</text>
<polyline points="1067.5,546.5 1051.5,546.5" fill="none" stroke="#840000" stroke-width="1" stroke-linejoin="round" stroke-linecap="butt"/>
<circle cx="1067.5" cy="546.5" r="1.8" fill="none" stroke="#840000" stroke-width="1.2"/>
<text x="1051.69" y="545.01" fill="#a90000" textLength="16.06" lengthAdjust="spacingAndGlyphs" font-size="12.6">28</text>
<text x="1008.09" y="551.11" fill="#006464" textLength="38.76" lengthAdjust="spacingAndGlyphs" font-size="12.6">RESET</text>
<polyline points="1067.5,563.5 1051.5,563.5" fill="none" stroke="#840000" stroke-width="1" stroke-linejoin="round" stroke-linecap="butt"/>
<circle cx="1067.5" cy="563.5" r="1.8" fill="none" stroke="#840000" stroke-width="1.2"/>
<text x="1055.39" y="561.5" fill="#a90000" textLength="8.66" lengthAdjust="spacingAndGlyphs" font-size="12.6">3</text>
<text x="1008.09" y="567.6" fill="#006464" textLength="38.76" lengthAdjust="spacingAndGlyphs" font-size="12.6">RESET</text>
<polyline points="1067.5,612.5 1051.5,612.5" fill="none" stroke="#840000" stroke-width="1" stroke-linejoin="round" stroke-linecap="butt"/>
<circle cx="1067.5" cy="612.5" r="1.8" fill="none" stroke="#840000" stroke-width="1.2"/>
<text x="1051.69" y="610.99" fill="#a90000" textLength="16.06" lengthAdjust="spacingAndGlyphs" font-size="12.6">18</text>
<text x="1015.59" y="617.09" fill="#006464" textLength="31.26" lengthAdjust="spacingAndGlyphs" font-size="12.6">AREF</text>
<polyline points="1067.5,645.5 1051.5,645.5" fill="none" stroke="#840000" stroke-width="1" stroke-linejoin="round" stroke-linecap="butt"/>
<circle cx="1067.5" cy="645.5" r="1.8" fill="none" stroke="#840000" stroke-width="1.2"/>
<text x="1051.69" y="643.99" fill="#a90000" textLength="16.06" lengthAdjust="spacingAndGlyphs" font-size="12.6">19</text>
<text x="1030.69" y="650.09" fill="#006464" textLength="16.16" lengthAdjust="spacingAndGlyphs" font-size="12.6">A0</text>
<polyline points="1067.5,662.5 1051.5,662.5" fill="none" stroke="#840000" stroke-width="1" stroke-linejoin="round" stroke-linecap="butt"/>
<circle cx="1067.5" cy="662.5" r="1.8" fill="none" stroke="#840000" stroke-width="1.2"/>
<text x="1051.69" y="660.48" fill="#a90000" textLength="16.06" lengthAdjust="spacingAndGlyphs" font-size="12.6">20</text>
<text x="1030.69" y="666.58" fill="#006464" textLength="16.16" lengthAdjust="spacingAndGlyphs" font-size="12.6">A1</text>
<polyline points="1067.5,678.5 1051.5,678.5" fill="none" stroke="#840000" stroke-width="1" stroke-linejoin="round" stroke-linecap="butt"/>
<text x="1051.69" y="676.98" fill="#a90000" textLength="16.06" lengthAdjust="spacingAndGlyphs" font-size="12.6">21</text>
<text x="1030.69" y="683.08" fill="#006464" textLength="16.16" lengthAdjust="spacingAndGlyphs" font-size="12.6">A2</text>
<polyline points="1067.5,695.5 1051.5,695.5" fill="none" stroke="#840000" stroke-width="1" stroke-linejoin="round" stroke-linecap="butt"/>
<text x="1051.69" y="693.48" fill="#a90000" textLength="16.06" lengthAdjust="spacingAndGlyphs" font-size="12.6">22</text>
<text x="1030.69" y="699.58" fill="#006464" textLength="16.16" lengthAdjust="spacingAndGlyphs" font-size="12.6">A3</text>
<polyline points="1067.5,711.5 1051.5,711.5" fill="none" stroke="#840000" stroke-width="1" stroke-linejoin="round" stroke-linecap="butt"/>
<text x="1051.69" y="709.97" fill="#a90000" textLength="16.06" lengthAdjust="spacingAndGlyphs" font-size="12.6">23</text>
<text x="1030.69" y="716.07" fill="#006464" textLength="16.16" lengthAdjust="spacingAndGlyphs" font-size="12.6">A4</text>
<polyline points="1067.5,728.5 1051.5,728.5" fill="none" stroke="#840000" stroke-width="1" stroke-linejoin="round" stroke-linecap="butt"/>
<text x="1051.69" y="726.47" fill="#a90000" textLength="16.06" lengthAdjust="spacingAndGlyphs" font-size="12.6">24</text>
<text x="1030.69" y="732.57" fill="#006464" textLength="16.16" lengthAdjust="spacingAndGlyphs" font-size="12.6">A5</text>
<polyline points="1067.5,744.5 1051.5,744.5" fill="none" stroke="#840000" stroke-width="1" stroke-linejoin="round" stroke-linecap="butt"/>
<circle cx="1067.5" cy="744.5" r="1.8" fill="none" stroke="#840000" stroke-width="1.2"/>
<text x="1051.69" y="742.97" fill="#a90000" textLength="16.06" lengthAdjust="spacingAndGlyphs" font-size="12.6">25</text>
<text x="1030.69" y="749.07" fill="#006464" textLength="16.16" lengthAdjust="spacingAndGlyphs" font-size="12.6">A6</text>
<polyline points="1067.5,761.5 1051.5,761.5" fill="none" stroke="#840000" stroke-width="1" stroke-linejoin="round" stroke-linecap="butt"/>
<circle cx="1067.5" cy="761.5" r="1.8" fill="none" stroke="#840000" stroke-width="1.2"/>
<text x="1051.69" y="759.46" fill="#a90000" textLength="16.06" lengthAdjust="spacingAndGlyphs" font-size="12.6">26</text>
<text x="1030.69" y="765.56" fill="#006464" textLength="16.16" lengthAdjust="spacingAndGlyphs" font-size="12.6">A7</text>
<polyline points="1010.5,539.5 1046.5,539.5" fill="none" stroke="#006464" stroke-width="1" stroke-linejoin="round" stroke-linecap="butt"/>
<polyline points="1010.5,555.5 1046.5,555.5" fill="none" stroke="#006464" stroke-width="1" stroke-linejoin="round" stroke-linecap="butt"/>
<polyline points="969.5,480.5 969.5,497.5" fill="none" stroke="#840000" stroke-width="1" stroke-linejoin="round" stroke-linecap="butt"/>
<circle cx="969.5" cy="480.5" r="1.8" fill="none" stroke="#840000" stroke-width="1.2"/>
<g transform="translate(962.54,496.12) rotate(-90)">
<text x="-0.88" y="4.33" fill="#a90000" textLength="16.06" lengthAdjust="spacingAndGlyphs" font-size="12.6">30</text>
</g>
<g transform="translate(969.04,521.12) rotate(-90)">
<text x="-0.88" y="4.33" fill="#006464" textLength="19.66" lengthAdjust="spacingAndGlyphs" font-size="12.6">VIN</text>
</g>
<polyline points="1002.5,480.5 1002.5,497.5" fill="none" stroke="#840000" stroke-width="1" stroke-linejoin="round" stroke-linecap="butt"/>
<circle cx="1002.5" cy="480.5" r="1.8" fill="none" stroke="#840000" stroke-width="1.2"/>
<g transform="translate(995.51,496.12) rotate(-90)">
<text x="-0.88" y="4.33" fill="#a90000" textLength="16.06" lengthAdjust="spacingAndGlyphs" font-size="12.6">17</text>
</g>
<g transform="translate(1002.01,525.02) rotate(-90)">
<text x="-0.88" y="4.33" fill="#006464" textLength="23.56" lengthAdjust="spacingAndGlyphs" font-size="12.6">3V3</text>
</g>
<polyline points="1018.5,480.5 1018.5,497.5" fill="none" stroke="#840000" stroke-width="1" stroke-linejoin="round" stroke-linecap="butt"/>
<g transform="translate(1012,496.12) rotate(-90)">
<text x="-0.88" y="4.33" fill="#a90000" textLength="16.06" lengthAdjust="spacingAndGlyphs" font-size="12.6">27</text>
</g>
<g transform="translate(1018.5,525.62) rotate(-90)">
<text x="-0.88" y="4.33" fill="#006464" textLength="24.16" lengthAdjust="spacingAndGlyphs" font-size="12.6">+5V</text>
</g>
<polyline points="985.5,810.5 985.5,794.5" fill="none" stroke="#840000" stroke-width="1" stroke-linejoin="round" stroke-linecap="butt"/>
<circle cx="985.5" cy="810.5" r="1.8" fill="none" stroke="#840000" stroke-width="1.2"/>
<g transform="translate(979.03,805.85) rotate(-90)">
<text x="-0.88" y="4.33" fill="#a90000" textLength="8.66" lengthAdjust="spacingAndGlyphs" font-size="12.6">4</text>
</g>
<g transform="translate(985.53,787.65) rotate(-90)">
<text x="-0.88" y="4.33" fill="#006464" textLength="23.76" lengthAdjust="spacingAndGlyphs" font-size="12.6">GND</text>
</g>
<polyline points="1002.5,810.5 1002.5,794.5" fill="none" stroke="#840000" stroke-width="1" stroke-linejoin="round" stroke-linecap="butt"/>
<g transform="translate(995.51,809.55) rotate(-90)">
<text x="-0.88" y="4.33" fill="#a90000" textLength="16.06" lengthAdjust="spacingAndGlyphs" font-size="12.6">29</text>
</g>
<g transform="translate(1002.01,787.65) rotate(-90)">
<text x="-0.88" y="4.33" fill="#006464" textLength="23.76" lengthAdjust="spacingAndGlyphs" font-size="12.6">GND</text>
</g>
<text x="1016.32" y="814.7" fill="#006464" textLength="16.56" lengthAdjust="spacingAndGlyphs" font-size="12.6">A1</text>
<text x="1016.32" y="831" fill="#006464" textLength="115.56" lengthAdjust="spacingAndGlyphs" font-size="12.6">Arduino_Nano_v3.x</text>
<rect x="1192" y="299" width="156" height="124" fill="none" stroke="#840000" stroke-width="2"/>
<circle cx="1216.35" cy="315.75" r="8.0" fill="none" stroke="#840000" stroke-width="1.2"/>
<circle cx="1323.51" cy="315.75" r="8.0" fill="none" stroke="#840000" stroke-width="1.2"/>
<circle cx="1298.5" cy="315.5" r="1.8" fill="none" stroke="#840000" stroke-width="1.2"/>
<rect x="1296.78" y="322" width="4" height="4" fill="none" stroke="#009600" stroke-width="0.9"/>
<g transform="translate(1298.78,309.2) rotate(-90)">
<text x="-0.88" y="4.33" fill="#006464" textLength="24.66" lengthAdjust="spacingAndGlyphs" font-size="12.6">GND</text>
</g>
<g transform="translate(1216.35,434.8) rotate(-90)">
<text x="-0.88" y="4.33" fill="#006464" textLength="24.56" lengthAdjust="spacingAndGlyphs" font-size="12.6">VCC</text>
</g>
<g transform="translate(1298.78,434.8) rotate(-90)">
<text x="-0.88" y="4.33" fill="#006464" textLength="24.56" lengthAdjust="spacingAndGlyphs" font-size="12.6">SCL</text>
</g>
<g transform="translate(1323.51,434.8) rotate(-90)">
<text x="-0.88" y="4.33" fill="#006464" textLength="24.56" lengthAdjust="spacingAndGlyphs" font-size="12.6">SDA</text>
</g>
<text x="1390.32" y="357.1" fill="#006464" textLength="16.76" lengthAdjust="spacingAndGlyphs" font-size="12.6">U1</text>
<text x="1390.32" y="373.6" fill="#006464" textLength="65.26" lengthAdjust="spacingAndGlyphs" font-size="12.6">LSM6DSOX</text>
<rect x="1373" y="563" width="99" height="132" fill="none" stroke="#840000" stroke-width="2"/>
<polyline points="1405.5,546.5 1405.5,563.5" fill="none" stroke="#840000" stroke-width="1" stroke-linejoin="round" stroke-linecap="butt"/>
<circle cx="1405.5" cy="546.5" r="1.8" fill="none" stroke="#840000" stroke-width="1.2"/>
<g transform="translate(1399.45,558.4) rotate(-90)">
<text x="-0.88" y="4.33" fill="#a90000" textLength="8.66" lengthAdjust="spacingAndGlyphs" font-size="12.6">1</text>
</g>
<g transform="translate(1405.95,591.2) rotate(-90)">
<text x="-0.88" y="4.33" fill="#006464" textLength="23.76" lengthAdjust="spacingAndGlyphs" font-size="12.6">VDD</text>
</g>
<polyline points="1422.5,546.5 1422.5,563.5" fill="none" stroke="#840000" stroke-width="1" stroke-linejoin="round" stroke-linecap="butt"/>
<g transform="translate(1415.94,558.4) rotate(-90)">
<text x="-0.88" y="4.33" fill="#a90000" textLength="8.66" lengthAdjust="spacingAndGlyphs" font-size="12.6">4</text>
</g>
<g transform="translate(1422.44,602.1) rotate(-90)">
<text x="-0.88" y="4.33" fill="#006464" textLength="34.66" lengthAdjust="spacingAndGlyphs" font-size="12.6">VDDIO</text>
</g>
<polyline points="1356.5,612.5 1372.5,612.5" fill="none" stroke="#840000" stroke-width="1" stroke-linejoin="round" stroke-linecap="butt"/>
<text x="1360.4" y="610.99" fill="#a90000" textLength="8.66" lengthAdjust="spacingAndGlyphs" font-size="12.6">7</text>
<text x="1378.39" y="617.09" fill="#006464" textLength="23.76" lengthAdjust="spacingAndGlyphs" font-size="12.6">SDL</text>
<polyline points="1356.5,629.5 1372.5,629.5" fill="none" stroke="#840000" stroke-width="1" stroke-linejoin="round" stroke-linecap="butt"/>
<text x="1360.4" y="627.49" fill="#a90000" textLength="8.66" lengthAdjust="spacingAndGlyphs" font-size="12.6">8</text>
<text x="1378.39" y="633.59" fill="#006464" textLength="23.76" lengthAdjust="spacingAndGlyphs" font-size="12.6">SCL</text>
<polyline points="1488.5,612.5 1471.5,612.5" fill="none" stroke="#840000" stroke-width="1" stroke-linejoin="round" stroke-linecap="butt"/>
<circle cx="1488.5" cy="612.5" r="1.8" fill="none" stroke="#840000" stroke-width="1.2"/>
<text x="1475.81" y="610.99" fill="#a90000" textLength="8.66" lengthAdjust="spacingAndGlyphs" font-size="12.6">6</text>
<text x="1440.22" y="617.09" fill="#006464" textLength="27.06" lengthAdjust="spacingAndGlyphs" font-size="12.6">INT1</text>
<polyline points="1488.5,629.5 1471.5,629.5" fill="none" stroke="#840000" stroke-width="1" stroke-linejoin="round" stroke-linecap="butt"/>
<circle cx="1488.5" cy="629.5" r="1.8" fill="none" stroke="#840000" stroke-width="1.2"/>
<text x="1475.81" y="627.49" fill="#a90000" textLength="8.66" lengthAdjust="spacingAndGlyphs" font-size="12.6">5</text>
<text x="1440.22" y="633.59" fill="#006464" textLength="27.06" lengthAdjust="spacingAndGlyphs" font-size="12.6">INT2</text>
<polyline points="1488.5,662.5 1471.5,662.5" fill="none" stroke="#840000" stroke-width="1" stroke-linejoin="round" stroke-linecap="butt"/>
<circle cx="1488.5" cy="662.5" r="1.8" fill="none" stroke="#840000" stroke-width="1.2"/>
<text x="1475.81" y="660.48" fill="#a90000" textLength="8.66" lengthAdjust="spacingAndGlyphs" font-size="12.6">2</text>
<text x="1443.52" y="666.58" fill="#006464" textLength="23.76" lengthAdjust="spacingAndGlyphs" font-size="12.6">CAP</text>
<polyline points="1422.5,711.5 1422.5,695.5" fill="none" stroke="#840000" stroke-width="1" stroke-linejoin="round" stroke-linecap="butt"/>
<circle cx="1422.5" cy="711.5" r="1.8" fill="none" stroke="#840000" stroke-width="1.2"/>
<g transform="translate(1415.94,706.87) rotate(-90)">
<text x="-0.88" y="4.33" fill="#a90000" textLength="8.66" lengthAdjust="spacingAndGlyphs" font-size="12.6">3</text>
</g>
<g transform="translate(1422.44,688.68) rotate(-90)">
<text x="-0.88" y="4.33" fill="#006464" textLength="23.76" lengthAdjust="spacingAndGlyphs" font-size="12.6">GND</text>
</g>
<polyline points="1422.44,703.42 1422.44,711.67 1430.68,711.67 1422.44,719.92 1414.19,711.67 1422.44,711.67" fill="none" stroke="#840000" stroke-width="1.1" stroke-linejoin="round" stroke-linecap="round"/>
<text x="1410.01" y="736.77" fill="#006464" textLength="24.86" lengthAdjust="spacingAndGlyphs" font-size="12.6">GND</text>
<circle cx="1422.5" cy="703.5" r="1.8" fill="none" stroke="#840000" stroke-width="1.2"/>
<text x="1437.72" y="715.3" fill="#006464" textLength="16.76" lengthAdjust="spacingAndGlyphs" font-size="12.6">U2</text>
<text x="1437.72" y="731.9" fill="#006464" textLength="70.36" lengthAdjust="spacingAndGlyphs" font-size="12.6">MPL3115A2</text>
</svg>
</body></html>
